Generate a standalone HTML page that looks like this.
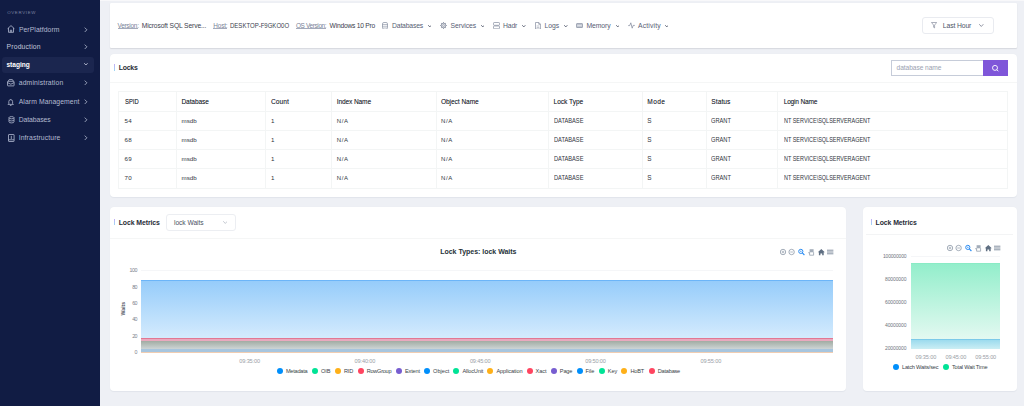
<!DOCTYPE html>
<html><head><meta charset="utf-8">
<style>
*{margin:0;padding:0;box-sizing:border-box}
html,body{width:1024px;height:406px;overflow:hidden;background:#eef0f5;font-family:"Liberation Sans",sans-serif;position:relative}
.a{position:absolute}
.t{position:absolute;white-space:nowrap;line-height:1}
</style></head><body>
<div class="a" style="left:0.00px;top:0.00px;width:99.50px;height:406.00px;background:#111c44"></div>
<div class="t" style="left:7.20px;top:11.00px;font-size:4.40px;font-weight:400;color:#7d85a3;letter-spacing:0.658px;">OVERVIEW</div>
<svg class="a" style="left:6.70px;top:25.40px" width="8" height="8" viewBox="0 0 8 8"><path d="M0.6 3.7 L4 0.6 L7.4 3.7 M1.5 3 V7.3 H6.5 V3" fill="none" stroke="#b3bad0" stroke-width="0.8"/><path d="M3.3 7.3 V5.2 H4.7 V7.3" fill="none" stroke="#b3bad0" stroke-width="0.8"/></svg>
<div class="t" style="left:18.90px;top:27.00px;font-size:6.80px;font-weight:400;color:#b3bad0;letter-spacing:0.082px;">PerPlatfdorm</div>
<svg class="a" style="left:84.10px;top:26.80px" width="4" height="6" viewBox="0 0 4 6"><path d="M1 0.9 L2.9 2.8 L1 4.7" fill="none" stroke="#b9c0d6" stroke-width="0.8" stroke-linecap="round" stroke-linejoin="round"/></svg>
<div class="t" style="left:6.60px;top:44.00px;font-size:6.80px;font-weight:400;color:#c3c8db;letter-spacing:0.163px;">Production</div>
<svg class="a" style="left:84.10px;top:44.00px" width="4" height="6" viewBox="0 0 4 6"><path d="M1 0.9 L2.9 2.8 L1 4.7" fill="none" stroke="#b9c0d6" stroke-width="0.8" stroke-linecap="round" stroke-linejoin="round"/></svg>
<div class="a" style="left:1.80px;top:56.50px;width:92.40px;height:16.40px;background:#1b264f;border-radius:3px"></div>
<div class="t" style="left:6.40px;top:62.00px;font-size:6.60px;font-weight:700;color:#ffffff;letter-spacing:-0.001px;">staging</div>
<svg class="a" style="left:84.30px;top:62.50px" width="3.80" height="2.54" viewBox="0 0 3.80 2.54"><path d="M0.5 0.5 L1.90 2.04 L3.30 0.5" fill="none" stroke="#d0d5e6" stroke-width="0.8" stroke-linecap="round" stroke-linejoin="round"/></svg>
<svg class="a" style="left:6.80px;top:79.30px" width="8" height="8" viewBox="0 0 8 8"><rect x="0.5" y="2.3" width="6.6" height="4.6" rx="0.5" fill="none" stroke="#b3bad0" stroke-width="0.8"/><path d="M1.2 2.3 L2.2 0.6 H5.4 L6.4 2.3 M0.5 3.6 L3.8 5.2 L7.1 3.6" fill="none" stroke="#b3bad0" stroke-width="0.8"/></svg>
<div class="t" style="left:18.70px;top:80.00px;font-size:6.80px;font-weight:400;color:#b3bad0;letter-spacing:0.173px;">administration</div>
<svg class="a" style="left:84.10px;top:80.20px" width="4" height="6" viewBox="0 0 4 6"><path d="M1 0.9 L2.9 2.8 L1 4.7" fill="none" stroke="#b9c0d6" stroke-width="0.8" stroke-linecap="round" stroke-linejoin="round"/></svg>
<svg class="a" style="left:6.80px;top:97.50px" width="8" height="8" viewBox="0 0 8 8"><path d="M1.8 5.6 V3.6 A1.9 1.9 0 0 1 5.6 3.6 V5.6 L6.4 6.4 H1 Z M2.9 7.4 H4.5" fill="none" stroke="#b3bad0" stroke-width="0.8"/><path d="M3.7 1 V1.7" fill="none" stroke="#b3bad0" stroke-width="0.8"/></svg>
<div class="t" style="left:18.70px;top:99.00px;font-size:6.80px;font-weight:400;color:#b3bad0;letter-spacing:0.096px;">Alarm Management</div>
<svg class="a" style="left:84.10px;top:98.60px" width="4" height="6" viewBox="0 0 4 6"><path d="M1 0.9 L2.9 2.8 L1 4.7" fill="none" stroke="#b9c0d6" stroke-width="0.8" stroke-linecap="round" stroke-linejoin="round"/></svg>
<svg class="a" style="left:7.60px;top:115.70px" width="7" height="8" viewBox="0 0 7 8"><ellipse cx="3.5" cy="1.7" rx="2.5" ry="1.1" fill="none" stroke="#b3bad0" stroke-width="0.8"/><path d="M1 1.7 V5.8 A2.5 1.1 0 0 0 6 5.8 V1.7 M1 3.8 A2.5 1.1 0 0 0 6 3.8" fill="none" stroke="#b3bad0" stroke-width="0.8"/></svg>
<div class="t" style="left:18.70px;top:117.00px;font-size:6.80px;font-weight:400;color:#b3bad0;letter-spacing:-0.079px;">Databases</div>
<svg class="a" style="left:84.10px;top:116.90px" width="4" height="6" viewBox="0 0 4 6"><path d="M1 0.9 L2.9 2.8 L1 4.7" fill="none" stroke="#b9c0d6" stroke-width="0.8" stroke-linecap="round" stroke-linejoin="round"/></svg>
<svg class="a" style="left:7.50px;top:133.60px" width="7" height="8" viewBox="0 0 7 8"><rect x="0.5" y="0.5" width="5.6" height="7" rx="0.4" fill="none" stroke="#b3bad0" stroke-width="0.8"/><path d="M3.3 1.8 V5 M0.5 5.8 H6.1" fill="none" stroke="#b3bad0" stroke-width="0.8"/></svg>
<div class="t" style="left:18.70px;top:135.00px;font-size:6.80px;font-weight:400;color:#b3bad0;letter-spacing:0.125px;">Infrastructure</div>
<svg class="a" style="left:84.10px;top:135.20px" width="4" height="6" viewBox="0 0 4 6"><path d="M1 0.9 L2.9 2.8 L1 4.7" fill="none" stroke="#b9c0d6" stroke-width="0.8" stroke-linecap="round" stroke-linejoin="round"/></svg>
<div class="a" style="left:100.00px;top:0.00px;width:924.00px;height:1.20px;background:#f8f8fa"></div>
<div class="a" style="left:110.00px;top:3.40px;width:907.00px;height:44.60px;background:#fff;border-radius:1px;box-shadow:0 1px 1.2px rgba(20,20,30,0.10), 0 0 1px rgba(20,20,40,0.06)"></div>
<div class="t" style="left:117.50px;top:23.00px;font-size:6.40px;font-weight:400;color:#7a8398;letter-spacing:-0.241px;">Version:</div>
<div class="a" style="left:117.50px;top:28.10px;width:20.80px;height:0.70px;background:#a3aabb"></div>
<div class="t" style="left:141.70px;top:23.00px;font-size:6.70px;font-weight:400;color:#3b414e;letter-spacing:-0.113px;">Microsoft SQL Serve...</div>
<div class="t" style="left:213.30px;top:23.00px;font-size:6.40px;font-weight:400;color:#7a8398;letter-spacing:-0.149px;">Host:</div>
<div class="a" style="left:213.30px;top:28.10px;width:13.70px;height:0.70px;background:#a3aabb"></div>
<div class="t" style="left:230.00px;top:23.00px;font-size:6.70px;font-weight:400;color:#3b414e;transform:scaleX(0.9001);transform-origin:0 0;">DESKTOP-F9GKO0O</div>
<div class="t" style="left:296.00px;top:23.00px;font-size:6.40px;font-weight:400;color:#7a8398;letter-spacing:-0.351px;">OS Version:</div>
<div class="a" style="left:296.00px;top:28.10px;width:30.00px;height:0.70px;background:#a3aabb"></div>
<div class="t" style="left:329.60px;top:23.00px;font-size:6.70px;font-weight:400;color:#3b414e;letter-spacing:-0.232px;">Windows 10 Pro</div>
<svg class="a" style="left:382.00px;top:21.70px" width="6" height="7.6" viewBox="0 0 6 7.6"><rect x="0.5" y="0.5" width="5" height="6.6" rx="1.4" fill="none" stroke="#838b9d" stroke-width="0.7"/><path d="M0.5 2.7 H5.5 M0.5 4.9 H5.5" fill="none" stroke="#838b9d" stroke-width="0.7"/></svg>
<div class="t" style="left:392.00px;top:23.00px;font-size:6.80px;font-weight:400;color:#566074;letter-spacing:-0.154px;">Databases</div>
<svg class="a" style="left:427.90px;top:24.70px" width="3.60" height="2.43" viewBox="0 0 3.60 2.43"><path d="M0.5 0.5 L1.80 1.93 L3.10 0.5" fill="none" stroke="#4f576a" stroke-width="0.85" stroke-linecap="round" stroke-linejoin="round"/></svg>
<svg class="a" style="left:440.00px;top:22.00px" width="7" height="7" viewBox="0 0 7 7"><circle cx="3.5" cy="3.5" r="2.2" fill="none" stroke="#838b9d" stroke-width="0.9"/><circle cx="3.5" cy="3.5" r="0.9" fill="none" stroke="#838b9d" stroke-width="0.7"/><path d="M6.00 3.50 L6.70 3.50 M5.27 5.27 L5.76 5.76 M3.50 6.00 L3.50 6.70 M1.73 5.27 L1.24 5.76 M1.00 3.50 L0.30 3.50 M1.73 1.73 L1.24 1.24 M3.50 1.00 L3.50 0.30 M5.27 1.73 L5.76 1.24" stroke="#838b9d" stroke-width="1.1"/></svg>
<div class="t" style="left:450.50px;top:23.00px;font-size:6.80px;font-weight:400;color:#566074;letter-spacing:-0.056px;">Services</div>
<svg class="a" style="left:480.60px;top:24.70px" width="3.60" height="2.43" viewBox="0 0 3.60 2.43"><path d="M0.5 0.5 L1.80 1.93 L3.10 0.5" fill="none" stroke="#4f576a" stroke-width="0.85" stroke-linecap="round" stroke-linejoin="round"/></svg>
<svg class="a" style="left:493.00px;top:21.80px" width="7" height="7.3" viewBox="0 0 7 7.3"><rect x="0.5" y="0.5" width="6" height="2.8" rx="0.7" fill="none" stroke="#838b9d" stroke-width="0.7"/><rect x="0.5" y="4" width="6" height="2.8" rx="0.7" fill="none" stroke="#838b9d" stroke-width="0.7"/></svg>
<div class="t" style="left:503.00px;top:23.00px;font-size:6.80px;font-weight:400;color:#566074;letter-spacing:-0.153px;">Hadr</div>
<svg class="a" style="left:522.10px;top:24.70px" width="3.60" height="2.43" viewBox="0 0 3.60 2.43"><path d="M0.5 0.5 L1.80 1.93 L3.10 0.5" fill="none" stroke="#4f576a" stroke-width="0.85" stroke-linecap="round" stroke-linejoin="round"/></svg>
<svg class="a" style="left:535.00px;top:21.80px" width="6.2" height="7.6" viewBox="0 0 6.2 7.6"><path d="M0.5 0.5 H3.8 L5.6 2.3 V7.1 H0.5 Z M3.8 0.5 V2.3 H5.6" fill="none" stroke="#838b9d" stroke-width="0.7"/><path d="M1.6 4 H4.4 M1.6 5.5 H4.4" stroke="#838b9d" stroke-width="0.5"/></svg>
<div class="t" style="left:544.50px;top:23.00px;font-size:6.80px;font-weight:400;color:#566074;letter-spacing:-0.022px;">Logs</div>
<svg class="a" style="left:564.10px;top:24.70px" width="3.60" height="2.43" viewBox="0 0 3.60 2.43"><path d="M0.5 0.5 L1.80 1.93 L3.10 0.5" fill="none" stroke="#4f576a" stroke-width="0.85" stroke-linecap="round" stroke-linejoin="round"/></svg>
<svg class="a" style="left:576.00px;top:23.20px" width="7" height="5" viewBox="0 0 7 5"><rect x="0.4" y="0.6" width="6.2" height="3.9" rx="0.6" fill="#c3c8d2" stroke="#838b9d" stroke-width="0.7"/><path d="M1.3 2.5 H5.7" stroke="#eef0f4" stroke-width="0.6"/></svg>
<div class="t" style="left:586.40px;top:23.00px;font-size:6.80px;font-weight:400;color:#566074;letter-spacing:-0.055px;">Memory</div>
<svg class="a" style="left:615.50px;top:24.70px" width="3.60" height="2.43" viewBox="0 0 3.60 2.43"><path d="M0.5 0.5 L1.80 1.93 L3.10 0.5" fill="none" stroke="#4f576a" stroke-width="0.85" stroke-linecap="round" stroke-linejoin="round"/></svg>
<svg class="a" style="left:628.00px;top:22.00px" width="7" height="7" viewBox="0 0 7 7"><path d="M0.2 3.6 H1.7 L2.8 0.8 L4.2 6.2 L5.2 3.4 H6.8" fill="none" stroke="#838b9d" stroke-width="0.75"/></svg>
<div class="t" style="left:638.00px;top:23.00px;font-size:6.80px;font-weight:400;color:#566074;letter-spacing:0.163px;">Activity</div>
<svg class="a" style="left:664.50px;top:24.70px" width="3.60" height="2.43" viewBox="0 0 3.60 2.43"><path d="M0.5 0.5 L1.80 1.93 L3.10 0.5" fill="none" stroke="#4f576a" stroke-width="0.85" stroke-linecap="round" stroke-linejoin="round"/></svg>
<div class="a" style="left:921.60px;top:17.20px;width:72.00px;height:16.60px;border:1px solid #e9ebf0;border-radius:3px;background:#fff"></div>
<svg class="a" style="left:930.80px;top:22.40px" width="6.2" height="6.5" viewBox="0 0 6.2 6.5"><path d="M0.5 0.5 H5.7 L3.6 3.1 V5.9 L2.6 5.3 V3.1 Z" fill="none" stroke="#737b8e" stroke-width="0.6" stroke-linejoin="round"/></svg>
<div class="t" style="left:942.80px;top:23.00px;font-size:6.80px;font-weight:400;color:#4b5366;letter-spacing:-0.113px;">Last Hour</div>
<svg class="a" style="left:979.30px;top:24.10px" width="4.60" height="2.98" viewBox="0 0 4.60 2.98"><path d="M0.5 0.5 L2.30 2.48 L4.10 0.5" fill="none" stroke="#6f7688" stroke-width="0.75" stroke-linecap="round" stroke-linejoin="round"/></svg>
<div class="a" style="left:110.00px;top:54.00px;width:907.00px;height:143.00px;background:#fff;border-radius:4px;box-shadow:0 0.5px 1px rgba(40,50,90,0.06)"></div>
<div class="a" style="left:114.10px;top:64.20px;width:1.30px;height:6.50px;background:linear-gradient(#c4aef6,#9fd9f3)"></div>
<div class="t" style="left:118.70px;top:65.00px;font-size:6.90px;font-weight:700;color:#262b36;letter-spacing:-0.188px;">Locks</div>
<div class="a" style="left:110.00px;top:81.60px;width:907.00px;height:1.00px;background:#f5f6f6"></div>
<div class="a" style="left:891.00px;top:60.10px;width:92.00px;height:15.50px;border:1px solid #c6ccd9;border-right:none;background:#fff"></div>
<div class="t" style="left:896.60px;top:65.00px;font-size:6.60px;font-weight:400;color:#9aa1b1;letter-spacing:-0.053px;">database name</div>
<div class="a" style="left:982.70px;top:60.10px;width:25.60px;height:15.50px;background:#7f56d9"></div>
<svg class="a" style="left:990.50px;top:63.50px" width="9" height="9" viewBox="0 0 9 9"><circle cx="4" cy="3.9" r="2.5" fill="none" stroke="#fff" stroke-width="0.9"/><path d="M5.8 5.7 L7.4 7.3" stroke="#fff" stroke-width="0.9"/></svg>
<div class="a" style="left:118.20px;top:91.00px;width:889.80px;height:97.80px;border:1px solid #f3f5f5"></div>
<div class="a" style="left:118.20px;top:110.90px;width:889.80px;height:1.00px;background:#f3f5f5"></div>
<div class="a" style="left:118.20px;top:130.00px;width:889.80px;height:1.00px;background:#f3f5f5"></div>
<div class="a" style="left:118.20px;top:149.20px;width:889.80px;height:1.00px;background:#f3f5f5"></div>
<div class="a" style="left:118.20px;top:168.30px;width:889.80px;height:1.00px;background:#f3f5f5"></div>
<div class="a" style="left:176.10px;top:91.00px;width:1.00px;height:97.80px;background:#f3f5f5"></div>
<div class="a" style="left:264.80px;top:91.00px;width:1.00px;height:97.80px;background:#f3f5f5"></div>
<div class="a" style="left:330.80px;top:91.00px;width:1.00px;height:97.80px;background:#f3f5f5"></div>
<div class="a" style="left:435.60px;top:91.00px;width:1.00px;height:97.80px;background:#f3f5f5"></div>
<div class="a" style="left:547.60px;top:91.00px;width:1.00px;height:97.80px;background:#f3f5f5"></div>
<div class="a" style="left:642.00px;top:91.00px;width:1.00px;height:97.80px;background:#f3f5f5"></div>
<div class="a" style="left:705.80px;top:91.00px;width:1.00px;height:97.80px;background:#f3f5f5"></div>
<div class="a" style="left:777.20px;top:91.00px;width:1.00px;height:97.80px;background:#f3f5f5"></div>
<div class="t" style="left:124.60px;top:99.00px;font-size:6.50px;font-weight:400;color:#262a33;transform:scaleX(0.8953);transform-origin:0 0;text-shadow:0.2px 0 0 rgba(38,42,51,0.45)">SPID</div>
<div class="t" style="left:181.50px;top:99.00px;font-size:6.50px;font-weight:400;color:#262a33;letter-spacing:-0.082px;text-shadow:0.2px 0 0 rgba(38,42,51,0.45)">Database</div>
<div class="t" style="left:271.00px;top:99.00px;font-size:6.50px;font-weight:400;color:#262a33;letter-spacing:0.126px;text-shadow:0.2px 0 0 rgba(38,42,51,0.45)">Count</div>
<div class="t" style="left:336.80px;top:99.00px;font-size:6.50px;font-weight:400;color:#262a33;letter-spacing:-0.088px;text-shadow:0.2px 0 0 rgba(38,42,51,0.45)">Index Name</div>
<div class="t" style="left:441.00px;top:99.00px;font-size:6.50px;font-weight:400;color:#262a33;letter-spacing:-0.028px;text-shadow:0.2px 0 0 rgba(38,42,51,0.45)">Object Name</div>
<div class="t" style="left:553.50px;top:99.00px;font-size:6.50px;font-weight:400;color:#262a33;letter-spacing:0.017px;text-shadow:0.2px 0 0 rgba(38,42,51,0.45)">Lock Type</div>
<div class="t" style="left:647.30px;top:99.00px;font-size:6.50px;font-weight:400;color:#262a33;letter-spacing:0.430px;text-shadow:0.2px 0 0 rgba(38,42,51,0.45)">Mode</div>
<div class="t" style="left:711.30px;top:99.00px;font-size:6.50px;font-weight:400;color:#262a33;letter-spacing:0.125px;text-shadow:0.2px 0 0 rgba(38,42,51,0.45)">Status</div>
<div class="t" style="left:783.70px;top:99.00px;font-size:6.50px;font-weight:400;color:#262a33;letter-spacing:-0.155px;text-shadow:0.2px 0 0 rgba(38,42,51,0.45)">Login Name</div>
<div class="t" style="left:124.60px;top:118.00px;font-size:6.20px;font-weight:400;color:#30343c;letter-spacing:0.224px;">54</div>
<div class="t" style="left:181.50px;top:118.00px;font-size:6.20px;font-weight:400;color:#30343c;letter-spacing:0.053px;">msdb</div>
<div class="t" style="left:271.00px;top:118.00px;font-size:6.20px;font-weight:400;color:#30343c;">1</div>
<div class="t" style="left:336.80px;top:118.00px;font-size:6.00px;font-weight:400;color:#30343c;letter-spacing:0.599px;">N/A</div>
<div class="t" style="left:441.00px;top:118.00px;font-size:6.00px;font-weight:400;color:#30343c;letter-spacing:0.599px;">N/A</div>
<div class="t" style="left:553.50px;top:118.00px;font-size:6.40px;font-weight:400;color:#30343c;transform:scaleX(0.8878);transform-origin:0 0;">DATABASE</div>
<div class="t" style="left:647.30px;top:118.00px;font-size:6.40px;font-weight:400;color:#30343c;">S</div>
<div class="t" style="left:711.30px;top:118.00px;font-size:6.40px;font-weight:400;color:#30343c;transform:scaleX(0.8915);transform-origin:0 0;">GRANT</div>
<div class="t" style="left:783.70px;top:118.00px;font-size:6.40px;font-weight:400;color:#30343c;transform:scaleX(0.8568);transform-origin:0 0;">NT SERVICE\SQLSERVERAGENT</div>
<div class="t" style="left:124.60px;top:137.00px;font-size:6.20px;font-weight:400;color:#30343c;letter-spacing:0.224px;">68</div>
<div class="t" style="left:181.50px;top:137.00px;font-size:6.20px;font-weight:400;color:#30343c;letter-spacing:0.053px;">msdb</div>
<div class="t" style="left:271.00px;top:137.00px;font-size:6.20px;font-weight:400;color:#30343c;">1</div>
<div class="t" style="left:336.80px;top:137.00px;font-size:6.00px;font-weight:400;color:#30343c;letter-spacing:0.599px;">N/A</div>
<div class="t" style="left:441.00px;top:137.00px;font-size:6.00px;font-weight:400;color:#30343c;letter-spacing:0.599px;">N/A</div>
<div class="t" style="left:553.50px;top:137.00px;font-size:6.40px;font-weight:400;color:#30343c;transform:scaleX(0.8878);transform-origin:0 0;">DATABASE</div>
<div class="t" style="left:647.30px;top:137.00px;font-size:6.40px;font-weight:400;color:#30343c;">S</div>
<div class="t" style="left:711.30px;top:137.00px;font-size:6.40px;font-weight:400;color:#30343c;transform:scaleX(0.8915);transform-origin:0 0;">GRANT</div>
<div class="t" style="left:783.70px;top:137.00px;font-size:6.40px;font-weight:400;color:#30343c;transform:scaleX(0.8568);transform-origin:0 0;">NT SERVICE\SQLSERVERAGENT</div>
<div class="t" style="left:124.60px;top:156.00px;font-size:6.20px;font-weight:400;color:#30343c;letter-spacing:0.224px;">69</div>
<div class="t" style="left:181.50px;top:156.00px;font-size:6.20px;font-weight:400;color:#30343c;letter-spacing:0.053px;">msdb</div>
<div class="t" style="left:271.00px;top:156.00px;font-size:6.20px;font-weight:400;color:#30343c;">1</div>
<div class="t" style="left:336.80px;top:156.00px;font-size:6.00px;font-weight:400;color:#30343c;letter-spacing:0.599px;">N/A</div>
<div class="t" style="left:441.00px;top:156.00px;font-size:6.00px;font-weight:400;color:#30343c;letter-spacing:0.599px;">N/A</div>
<div class="t" style="left:553.50px;top:156.00px;font-size:6.40px;font-weight:400;color:#30343c;transform:scaleX(0.8878);transform-origin:0 0;">DATABASE</div>
<div class="t" style="left:647.30px;top:156.00px;font-size:6.40px;font-weight:400;color:#30343c;">S</div>
<div class="t" style="left:711.30px;top:156.00px;font-size:6.40px;font-weight:400;color:#30343c;transform:scaleX(0.8915);transform-origin:0 0;">GRANT</div>
<div class="t" style="left:783.70px;top:156.00px;font-size:6.40px;font-weight:400;color:#30343c;transform:scaleX(0.8568);transform-origin:0 0;">NT SERVICE\SQLSERVERAGENT</div>
<div class="t" style="left:124.60px;top:175.00px;font-size:6.20px;font-weight:400;color:#30343c;letter-spacing:0.224px;">70</div>
<div class="t" style="left:181.50px;top:175.00px;font-size:6.20px;font-weight:400;color:#30343c;letter-spacing:0.053px;">msdb</div>
<div class="t" style="left:271.00px;top:175.00px;font-size:6.20px;font-weight:400;color:#30343c;">1</div>
<div class="t" style="left:336.80px;top:175.00px;font-size:6.00px;font-weight:400;color:#30343c;letter-spacing:0.599px;">N/A</div>
<div class="t" style="left:441.00px;top:175.00px;font-size:6.00px;font-weight:400;color:#30343c;letter-spacing:0.599px;">N/A</div>
<div class="t" style="left:553.50px;top:175.00px;font-size:6.40px;font-weight:400;color:#30343c;transform:scaleX(0.8878);transform-origin:0 0;">DATABASE</div>
<div class="t" style="left:647.30px;top:175.00px;font-size:6.40px;font-weight:400;color:#30343c;">S</div>
<div class="t" style="left:711.30px;top:175.00px;font-size:6.40px;font-weight:400;color:#30343c;transform:scaleX(0.8915);transform-origin:0 0;">GRANT</div>
<div class="t" style="left:783.70px;top:175.00px;font-size:6.40px;font-weight:400;color:#30343c;transform:scaleX(0.8568);transform-origin:0 0;">NT SERVICE\SQLSERVERAGENT</div>
<div class="a" style="left:110.00px;top:206.80px;width:736.00px;height:184.20px;background:#fff;border-radius:4px;box-shadow:0 0.5px 1px rgba(40,50,90,0.06)"></div>
<div class="a" style="left:114.20px;top:219.30px;width:1.30px;height:6.00px;background:linear-gradient(#c4aef6,#9fd9f3)"></div>
<div class="t" style="left:118.70px;top:220.00px;font-size:6.90px;font-weight:700;color:#262b36;letter-spacing:-0.081px;">Lock Metrics</div>
<div class="a" style="left:166.40px;top:214.30px;width:69.20px;height:16.50px;border:1px solid #eceef2;border-radius:3px"></div>
<div class="t" style="left:174.00px;top:220.00px;font-size:6.60px;font-weight:400;color:#4b5263;letter-spacing:-0.018px;">lock Waits</div>
<svg class="a" style="left:222.80px;top:221.00px" width="4.60" height="2.98" viewBox="0 0 4.60 2.98"><path d="M0.5 0.5 L2.30 2.48 L4.10 0.5" fill="none" stroke="#aeb4c0" stroke-width="0.7" stroke-linecap="round" stroke-linejoin="round"/></svg>
<div class="a" style="left:110.00px;top:237.60px;width:736.00px;height:1.00px;background:#f5f6f6"></div>
<div class="t" style="left:440.20px;top:248.00px;font-size:7.00px;font-weight:700;color:#263238;letter-spacing:-0.016px;">Lock Types: lock Waits</div>
<div class="t" style="left:129.60px;top:268.00px;font-size:5.30px;font-weight:400;color:#7c818b;letter-spacing:-0.456px;">100</div>
<div class="t" style="left:132.30px;top:285.00px;font-size:5.30px;font-weight:400;color:#7c818b;letter-spacing:-0.665px;">80</div>
<div class="t" style="left:132.30px;top:301.00px;font-size:5.30px;font-weight:400;color:#7c818b;letter-spacing:-0.665px;">60</div>
<div class="t" style="left:132.30px;top:317.00px;font-size:5.30px;font-weight:400;color:#7c818b;letter-spacing:-0.665px;">40</div>
<div class="t" style="left:132.30px;top:334.00px;font-size:5.30px;font-weight:400;color:#7c818b;letter-spacing:-0.665px;">20</div>
<div class="t" style="left:134.40px;top:350.00px;font-size:5.30px;font-weight:400;color:#7c818b;">0</div>
<div class="a" style="left:141.20px;top:269.80px;width:691.80px;height:0.80px;background:#f5f6f8"></div>
<div class="a" style="left:141.20px;top:279.80px;width:691.80px;height:58.20px;background:linear-gradient(#96ccfa,#d4ebfd);border-top:1px solid #6cb5f8"></div>
<div class="a" style="left:141.20px;top:338.00px;width:691.80px;height:1.40px;background:#e27793"></div>
<div class="a" style="left:141.20px;top:339.40px;width:691.80px;height:1.70px;background:#e9a9be"></div>
<div class="a" style="left:141.20px;top:341.10px;width:691.80px;height:7.90px;background:linear-gradient(#a1aca3,#cdd4d5)"></div>
<div class="a" style="left:141.20px;top:349.00px;width:691.80px;height:2.80px;background:#a7c5de"></div>
<div class="a" style="left:141.20px;top:351.80px;width:691.80px;height:1.00px;background:#f0cdb2"></div>
<div class="t" style="left:116.5px;top:306px;font-size:5.2px;font-weight:700;color:#50555e;transform:rotate(-90deg);transform-origin:center">Waits</div>
<div class="t" style="left:239.30px;top:359.00px;font-size:5.60px;font-weight:400;color:#9a9ea6;letter-spacing:-0.148px;">09:35:00</div>
<div class="t" style="left:354.60px;top:359.00px;font-size:5.60px;font-weight:400;color:#9a9ea6;letter-spacing:-0.148px;">09:40:00</div>
<div class="t" style="left:469.90px;top:359.00px;font-size:5.60px;font-weight:400;color:#9a9ea6;letter-spacing:-0.148px;">09:45:00</div>
<div class="t" style="left:585.20px;top:359.00px;font-size:5.60px;font-weight:400;color:#9a9ea6;letter-spacing:-0.148px;">09:50:00</div>
<div class="t" style="left:700.50px;top:359.00px;font-size:5.60px;font-weight:400;color:#9a9ea6;letter-spacing:-0.148px;">09:55:00</div>
<div class="a" style="left:276.90px;top:367.70px;width:6.00px;height:6.00px;border-radius:50%;background:#008ffb"></div>
<div class="t" style="left:285.90px;top:369.00px;font-size:5.60px;font-weight:400;color:#3a3f48;letter-spacing:-0.227px;">Metadata</div>
<div class="a" style="left:312.40px;top:367.70px;width:6.00px;height:6.00px;border-radius:50%;background:#00e396"></div>
<div class="t" style="left:321.00px;top:369.00px;font-size:5.60px;font-weight:400;color:#3a3f48;letter-spacing:-0.043px;">OIB</div>
<div class="a" style="left:335.00px;top:367.70px;width:6.00px;height:6.00px;border-radius:50%;background:#feb019"></div>
<div class="t" style="left:343.90px;top:369.00px;font-size:5.60px;font-weight:400;color:#3a3f48;letter-spacing:-0.142px;">RID</div>
<div class="a" style="left:357.70px;top:367.70px;width:6.00px;height:6.00px;border-radius:50%;background:#ff4560"></div>
<div class="t" style="left:366.70px;top:369.00px;font-size:5.60px;font-weight:400;color:#3a3f48;letter-spacing:-0.272px;">RowGroup</div>
<div class="a" style="left:396.40px;top:367.70px;width:6.00px;height:6.00px;border-radius:50%;background:#775dd0"></div>
<div class="t" style="left:405.00px;top:369.00px;font-size:5.60px;font-weight:400;color:#3a3f48;letter-spacing:-0.163px;">Extent</div>
<div class="a" style="left:424.40px;top:367.70px;width:6.00px;height:6.00px;border-radius:50%;background:#008ffb"></div>
<div class="t" style="left:433.00px;top:369.00px;font-size:5.60px;font-weight:400;color:#3a3f48;letter-spacing:0.035px;">Object</div>
<div class="a" style="left:453.40px;top:367.70px;width:6.00px;height:6.00px;border-radius:50%;background:#00e396"></div>
<div class="t" style="left:462.50px;top:369.00px;font-size:5.60px;font-weight:400;color:#3a3f48;letter-spacing:-0.155px;">AllocUnit</div>
<div class="a" style="left:487.40px;top:367.70px;width:6.00px;height:6.00px;border-radius:50%;background:#feb019"></div>
<div class="t" style="left:496.50px;top:369.00px;font-size:5.60px;font-weight:400;color:#3a3f48;letter-spacing:-0.134px;">Application</div>
<div class="a" style="left:527.10px;top:367.70px;width:6.00px;height:6.00px;border-radius:50%;background:#ff4560"></div>
<div class="t" style="left:535.50px;top:369.00px;font-size:5.60px;font-weight:400;color:#3a3f48;letter-spacing:-0.049px;">Xact</div>
<div class="a" style="left:551.40px;top:367.70px;width:6.00px;height:6.00px;border-radius:50%;background:#775dd0"></div>
<div class="t" style="left:559.80px;top:369.00px;font-size:5.60px;font-weight:400;color:#3a3f48;letter-spacing:-0.140px;">Page</div>
<div class="a" style="left:577.40px;top:367.70px;width:6.00px;height:6.00px;border-radius:50%;background:#008ffb"></div>
<div class="t" style="left:585.50px;top:369.00px;font-size:5.60px;font-weight:400;color:#3a3f48;letter-spacing:-0.088px;">File</div>
<div class="a" style="left:599.40px;top:367.70px;width:6.00px;height:6.00px;border-radius:50%;background:#00e396"></div>
<div class="t" style="left:607.80px;top:369.00px;font-size:5.60px;font-weight:400;color:#3a3f48;letter-spacing:-0.045px;">Key</div>
<div class="a" style="left:621.40px;top:367.70px;width:6.00px;height:6.00px;border-radius:50%;background:#feb019"></div>
<div class="t" style="left:630.50px;top:369.00px;font-size:5.60px;font-weight:400;color:#3a3f48;letter-spacing:-0.185px;">HoBT</div>
<div class="a" style="left:649.00px;top:367.70px;width:6.00px;height:6.00px;border-radius:50%;background:#ff4560"></div>
<div class="t" style="left:657.80px;top:369.00px;font-size:5.60px;font-weight:400;color:#3a3f48;letter-spacing:-0.216px;">Database</div>
<svg class="a" style="left:780.00px;top:248.20px" width="54" height="8" viewBox="0 0 54 8"><circle cx="3" cy="4" r="2.7" fill="none" stroke="#8793a3" stroke-width="0.75"/><path d="M1.7 4 H4.3 M3 2.7 V5.3" stroke="#8793a3" stroke-width="0.65"/><circle cx="11.6" cy="4" r="2.7" fill="none" stroke="#8793a3" stroke-width="0.75"/><path d="M10.3 4 H12.9" stroke="#8793a3" stroke-width="0.65"/><circle cx="20.8" cy="3.4" r="2.1" fill="none" stroke="#2a8cf2" stroke-width="1"/><path d="M22.3 4.9 L24.4 7" stroke="#2a8cf2" stroke-width="1.1"/><path d="M20 3.4 H21.6 M20.8 2.6 V4.2" stroke="#2a8cf2" stroke-width="0.5"/><path d="M29.6 1.2 H33.6 V4.3 H29.6 Z" fill="#a3adba"/><path d="M29.6 4.2 V7.2 H33.6 V4.2 M29.6 5 L28.2 4.6" fill="none" stroke="#8793a3" stroke-width="0.7"/><path d="M37.8 4.2 L41.3 0.9 L44.8 4.2 H43.7 V7.2 H42.2 V5.4 H40.4 V7.2 H38.9 V4.2 Z" fill="#5f6f82"/><path d="M47 2.2 H53.4 M47 4 H53.4 M47 5.8 H53.4" stroke="#8793a3" stroke-width="1"/></svg>
<div class="a" style="left:863.00px;top:206.80px;width:154.00px;height:184.20px;background:#fff;border-radius:4px;box-shadow:0 0.5px 1px rgba(40,50,90,0.06)"></div>
<div class="a" style="left:870.90px;top:219.00px;width:1.30px;height:6.20px;background:linear-gradient(#c4aef6,#9fd9f3)"></div>
<div class="t" style="left:875.60px;top:220.00px;font-size:6.90px;font-weight:700;color:#262b36;letter-spacing:-0.081px;">Lock Metrics</div>
<div class="a" style="left:866.00px;top:234.10px;width:147.00px;height:1.00px;background:#f3f4f5"></div>
<svg class="a" style="left:947.20px;top:244.20px" width="54" height="8" viewBox="0 0 54 8"><circle cx="3" cy="4" r="2.7" fill="none" stroke="#8793a3" stroke-width="0.75"/><path d="M1.7 4 H4.3 M3 2.7 V5.3" stroke="#8793a3" stroke-width="0.65"/><circle cx="11.6" cy="4" r="2.7" fill="none" stroke="#8793a3" stroke-width="0.75"/><path d="M10.3 4 H12.9" stroke="#8793a3" stroke-width="0.65"/><circle cx="20.8" cy="3.4" r="2.1" fill="none" stroke="#2a8cf2" stroke-width="1"/><path d="M22.3 4.9 L24.4 7" stroke="#2a8cf2" stroke-width="1.1"/><path d="M20 3.4 H21.6 M20.8 2.6 V4.2" stroke="#2a8cf2" stroke-width="0.5"/><path d="M29.6 1.2 H33.6 V4.3 H29.6 Z" fill="#a3adba"/><path d="M29.6 4.2 V7.2 H33.6 V4.2 M29.6 5 L28.2 4.6" fill="none" stroke="#8793a3" stroke-width="0.7"/><path d="M37.8 4.2 L41.3 0.9 L44.8 4.2 H43.7 V7.2 H42.2 V5.4 H40.4 V7.2 H38.9 V4.2 Z" fill="#5f6f82"/><path d="M47 2.2 H53.4 M47 4 H53.4 M47 5.8 H53.4" stroke="#8793a3" stroke-width="1"/></svg>
<div class="t" style="left:883.00px;top:254.00px;font-size:5.00px;font-weight:400;color:#6f747d;letter-spacing:-0.191px;">100000000</div>
<div class="t" style="left:885.00px;top:277.00px;font-size:5.00px;font-weight:400;color:#6f747d;letter-spacing:-0.107px;">80000000</div>
<div class="t" style="left:885.00px;top:300.00px;font-size:5.00px;font-weight:400;color:#6f747d;letter-spacing:-0.107px;">60000000</div>
<div class="t" style="left:885.00px;top:323.00px;font-size:5.00px;font-weight:400;color:#6f747d;letter-spacing:-0.107px;">40000000</div>
<div class="t" style="left:885.00px;top:346.00px;font-size:5.00px;font-weight:400;color:#6f747d;letter-spacing:-0.107px;">20000000</div>
<div class="a" style="left:910.50px;top:256.40px;width:89.50px;height:0.80px;background:#f5f6f8"></div>
<div class="a" style="left:910.50px;top:263.00px;width:89.50px;height:76.20px;background:linear-gradient(#93eecb,#e3f9f1);border-top:1px solid #8aebc5"></div>
<div class="a" style="left:910.50px;top:339.20px;width:89.50px;height:9.60px;background:linear-gradient(#9cdbee,#cbeef4);border-top:1px solid #7ccae9"></div>
<div class="t" style="left:915.40px;top:355.00px;font-size:5.60px;font-weight:400;color:#9a9ea6;letter-spacing:-0.120px;">09:35:00</div>
<div class="t" style="left:945.40px;top:355.00px;font-size:5.60px;font-weight:400;color:#9a9ea6;letter-spacing:-0.120px;">09:45:00</div>
<div class="t" style="left:975.30px;top:355.00px;font-size:5.60px;font-weight:400;color:#9a9ea6;letter-spacing:-0.120px;">09:55:00</div>
<div class="a" style="left:892.70px;top:364.10px;width:6.00px;height:6.00px;border-radius:50%;background:#008ffb"></div>
<div class="t" style="left:902.00px;top:365.00px;font-size:5.60px;font-weight:400;color:#3a3f48;letter-spacing:-0.197px;">Latch Waits/sec</div>
<div class="a" style="left:943.00px;top:364.10px;width:6.00px;height:6.00px;border-radius:50%;background:#00e396"></div>
<div class="t" style="left:952.00px;top:365.00px;font-size:5.60px;font-weight:400;color:#3a3f48;letter-spacing:-0.179px;">Total Wait Time</div>
</body></html>
